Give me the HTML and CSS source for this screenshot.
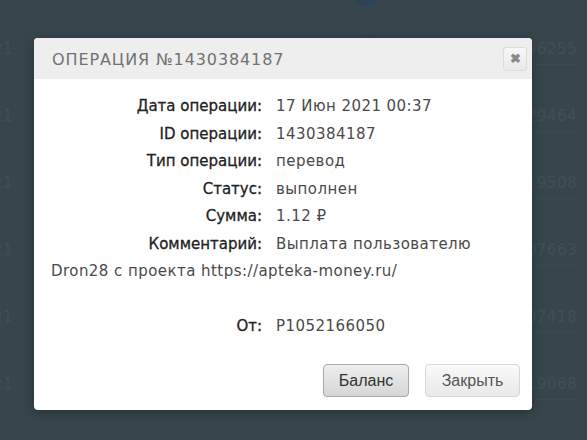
FILE: index.html
```html
<!DOCTYPE html>
<html lang="ru">
<head>
  <meta charset="UTF-8">
  <title>Операция №1430384187</title>
  <link rel="stylesheet" href="styles.css">
</head>
<body>
  <div class="page">
    <div class="avatar avatar-top"></div>
    <div class="avatar avatar-second"></div>
    <div class="history">
      <div class="history-row"><span>21</span><span>96255</span></div>
      <div class="history-row"><span>21</span><span>29464</span></div>
      <div class="history-row"><span>21</span><span>19508</span></div>
      <div class="history-row"><span>21</span><span>07663</span></div>
      <div class="history-row"><span>21</span><span>07418</span></div>
      <div class="history-row"><span>21</span><span>19068</span></div>
    </div>
  </div>

  <div class="overlay">
    <div class="modal">
      <div class="modal-header">
        <div class="modal-title">ОПЕРАЦИЯ №1430384187</div>
        <button class="close-btn">&#10006;</button>
      </div>
      <div class="modal-body">
        <div class="line"><span class="label">Дата операции:</span><span class="value">17 Июн 2021 00:37</span></div>
        <div class="line"><span class="label">ID операции:</span><span class="value">1430384187</span></div>
        <div class="line"><span class="label">Тип операции:</span><span class="value">перевод</span></div>
        <div class="line"><span class="label">Статус:</span><span class="value">выполнен</span></div>
        <div class="line"><span class="label">Сумма:</span><span class="value">1.12 &#8381;</span></div>
        <div class="line"><span class="label">Комментарий:</span><span class="value">Выплата пользователю Dron28 с проекта https://apteka-money.ru/</span></div>
        <div class="line empty">&nbsp;</div>
        <div class="line"><span class="label">От:</span><span class="value">P1052166050</span></div>
      </div>
      <div class="modal-footer">
        <button class="btn btn-dark">Баланс</button>
        <button class="btn btn-light">Закрыть</button>
      </div>
    </div>
  </div>
</body>
</html>
```

FILE: styles.css
```css
body {
  margin: 0;
  background-color: #37454d;
  font-family: "DejaVu Sans", sans-serif;
  width: 587px;
  height: 440px;
  overflow: hidden;
}
.page {
  position: relative;
  height: 440px;
}
.avatar {
  position: absolute;
  width: 32px;
  height: 32px;
  border-radius: 50%;
  background-color: #2c4556;
}
.avatar-top {
  left: 351px;
  top: -26px;
}
.avatar-second {
  left: 355px;
  top: 34px;
}
.history {
  padding-top: 40px;
}
.history-row {
  display: flex;
  justify-content: space-between;
  height: 67px;
  font-size: 15px;
  letter-spacing: 0.5px;
  color: #424f57;
  margin-left: -7px;
  padding-right: 10px;
}
.history-row span:last-child {
  border-bottom: 1px solid #3d4a52;
  height: 24px;
}
.overlay {
  position: absolute;
  top: 0;
  left: 0;
  width: 587px;
  height: 440px;
}
.modal {
  position: absolute;
  left: 34px;
  top: 38px;
  width: 498px;
  height: 372px;
  background-color: #ffffff;
  border-radius: 4px;
  box-shadow: 0 3px 12px rgba(0,0,0,0.3);
  overflow: hidden;
  display: flex;
  flex-direction: column;
}
.modal-header {
  background-color: #eeeeee;
  height: 41px;
  display: flex;
  align-items: center;
  justify-content: space-between;
  padding: 0 5px 0 18px;
}
.modal-title {
  font-size: 16px;
  letter-spacing: 0.9px;
  color: #727272;
  padding-top: 1px;
}
.close-btn {
  width: 24px;
  height: 24px;
  border: 1px solid #dcdcdc;
  border-radius: 3px;
  background: linear-gradient(#f7f7f7, #e9e9e9);
  color: #8a8a8a;
  font-size: 13px;
  font-weight: bold;
  padding: 0;
  line-height: 22px;
}
.modal-body {
  padding: 14px 17px 0 17px;
  font-size: 15px;
  line-height: 27.5px;
  letter-spacing: 0.45px;
  color: #4a4a4a;
  flex: 1;
}
.label {
  display: inline-block;
  width: 211px;
  text-align: right;
  color: #222222;
  letter-spacing: 0;
  margin-right: 14px;
  -webkit-text-stroke: 0.3px #222222;
}
.modal-footer {
  display: flex;
  justify-content: flex-end;
  gap: 16px;
  padding: 0 12px 13px 0;
}
.btn {
  font-family: "Liberation Sans", Arial, sans-serif;
  font-size: 16px;
  height: 33px;
  padding: 0;
  border-radius: 4px;
}
.btn-dark {
  width: 86px;
  color: #333333;
  border: 1px solid #a9a9a9;
  background: linear-gradient(#eeeeee, #d6d6d6);
}
.btn-light {
  width: 95px;
  color: #555555;
  border: 1px solid #d8d8d8;
  background: linear-gradient(#f9f9f9, #e9e9e9);
}
```
